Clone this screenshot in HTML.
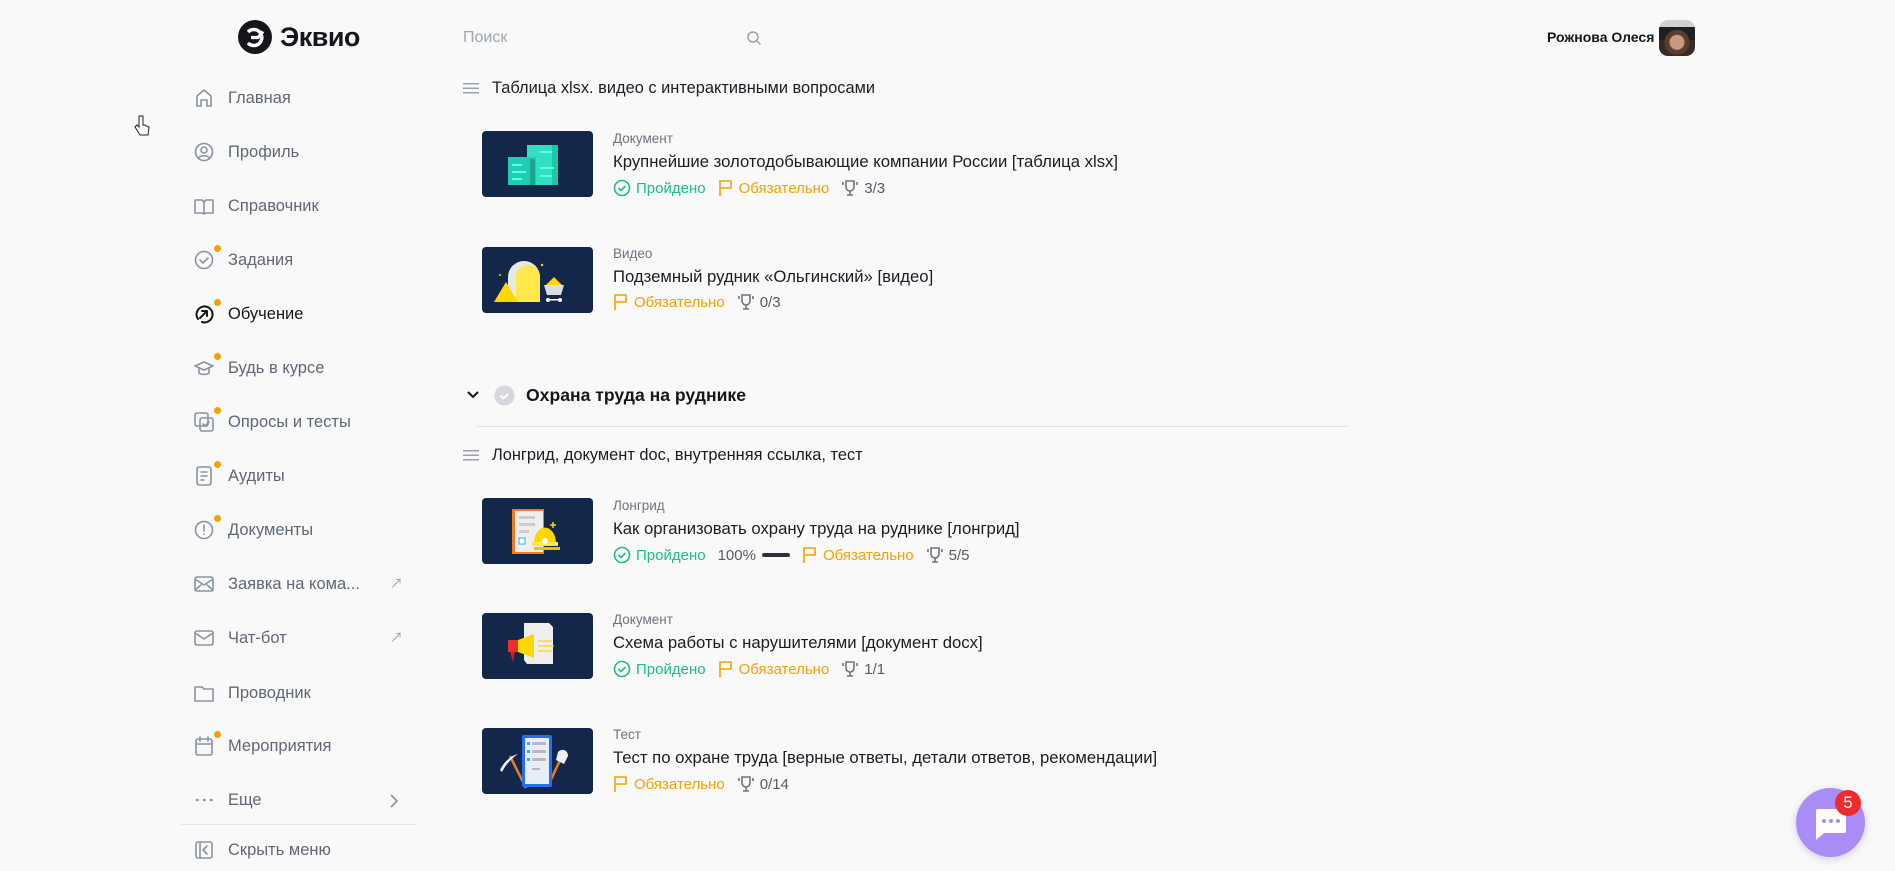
<!DOCTYPE html>
<html><head><meta charset="utf-8"><style>
*{margin:0;padding:0;box-sizing:border-box}
body{width:1895px;height:871px;background:#f9f9f9;font-family:"Liberation Sans","Noto Sans CJK SC",sans-serif;position:relative;overflow:hidden;color:#1a1d24}
.abs{position:absolute}
.nav{position:absolute;left:193px;display:flex;align-items:center;height:30px;font-size:16.5px;color:#5f6778}
.nav svg{width:22px;height:22px;margin-right:13px;fill:none;stroke:#8a93a3;stroke-width:1.6;stroke-linecap:round;stroke-linejoin:round}
.dot{position:absolute;left:214px;width:7px;height:7px;border-radius:50%;background:#f5a100}
.sec{position:absolute;left:463px;font-size:16.4px;display:flex;align-items:center}
.sec i{display:inline-block;width:16px;height:11px;margin-right:13px;background:linear-gradient(#9aa1ad 0 1.5px,transparent 1.5px 4.5px,#9aa1ad 4.5px 6px,transparent 6px 9px,#9aa1ad 9px 10.5px,transparent 10.5px);}
.thumb{position:absolute;left:482px;width:111px;height:66px;background:#13274a;border-radius:4px;overflow:hidden}
.type{position:absolute;left:613px;font-size:13.5px;color:#6d7480}
.title{position:absolute;left:613px;font-size:16.7px;color:#1a1d24}
.meta{position:absolute;left:613px;font-size:15px;display:flex;align-items:center;gap:0;color:#555c68}
.ok{color:#1dbb8a;display:flex;align-items:center;margin-right:12px}
.req{color:#f5a100;display:flex;align-items:center;margin-right:12px}
.tr{display:flex;align-items:center}
.meta svg{margin-right:5px}
</style></head><body>
<!-- logo -->
<div class="abs" style="left:238px;top:20px;width:34px;height:34px;border-radius:50%;background:#14161b"></div>
<svg class="abs" style="left:238px;top:20px" width="34" height="34" viewBox="0 0 34 34"><path d="M10 12 A8 8 0 1 1 10 23" fill="none" stroke="#fff" stroke-width="3.5"/><path d="M13 17.5h7l5-6" fill="none" stroke="#fff" stroke-width="3.2"/></svg>
<div class="abs" style="left:280px;top:22px;font-size:27px;font-weight:bold;color:#14161b;letter-spacing:-0.5px">Эквио</div>
<!-- search -->
<div class="abs" style="left:463px;top:29px;font-size:16px;color:#a0a6b0">Поиск</div>
<svg class="abs" style="left:746px;top:30px" width="16" height="16" viewBox="0 0 16 16" fill="none" stroke="#9aa1ad" stroke-width="1.5"><circle cx="7" cy="7" r="5"/><path d="M11 11l3.5 3.5"/></svg>
<!-- user -->
<div class="abs" style="left:1547px;top:29px;font-size:14px;font-weight:bold;color:#14161b">Рожнова Олеся</div>
<div class="abs" style="left:1659px;top:20px;width:36px;height:36px;border-radius:9px;background:radial-gradient(circle at 50% 62%,#c79b80 0 7px,#5a3d30 8px 12px,transparent 13px),linear-gradient(#cfd0d0 0 20%,#1e1f24 20% 55%,#3a2a24 55%)"></div>
<!-- nav -->
<div class="nav" style="top:83px"><svg viewBox="0 0 22 22"><path d="M4 19V9l7-6 7 6v10h-4v-6H8v6z"/></svg>Главная</div>
<div class="nav" style="top:137px"><svg viewBox="0 0 22 22"><circle cx="11" cy="11" r="8.5"/><circle cx="11" cy="9" r="3"/><path d="M5.5 17c2-3 9-3 11 0"/></svg>Профиль</div>
<div class="nav" style="top:191px"><svg viewBox="0 0 22 22"><path d="M2 5h7l2 2 2-2h7v13h-7l-2 1-2-1H2zM11 7v12"/></svg>Справочник</div>
<div class="dot" style="top:245px"></div>
<div class="nav" style="top:245px"><svg viewBox="0 0 22 22"><circle cx="11" cy="11" r="8.5"/><path d="M7 11l3 3 5-5"/></svg>Задания</div>
<div class="dot" style="top:299px"></div>
<div class="nav" style="top:299px;color:#14161b"><svg viewBox="0 0 22 22" style="stroke:#14161b;stroke-width:2"><path d="M5 16A8 8 0 1 1 9 19M7 15l7-7M9 8h5v5"/></svg>Обучение</div>
<div class="dot" style="top:353px"></div>
<div class="nav" style="top:353px"><svg viewBox="0 0 22 22"><path d="M2 9l9-4 9 4-9 4zM6 11v5c3 2 7 2 10 0v-5"/></svg>Будь в курсе</div>
<div class="dot" style="top:407px"></div>
<div class="nav" style="top:407px"><svg viewBox="0 0 22 22"><rect x="2" y="2" width="13" height="13" rx="2"/><rect x="7" y="7" width="13" height="13" rx="2"/><path d="M10 13l2 2 4-4"/></svg>Опросы и тесты</div>
<div class="dot" style="top:461px"></div>
<div class="nav" style="top:461px"><svg viewBox="0 0 22 22"><rect x="4" y="2" width="14" height="18" rx="2"/><path d="M8 7h6M8 11h6M8 15h3"/></svg>Аудиты</div>
<div class="dot" style="top:515px"></div>
<div class="nav" style="top:515px"><svg viewBox="0 0 22 22"><circle cx="11" cy="11" r="8.5"/><path d="M11 6v6M11 15v.5"/></svg>Документы</div>
<div class="nav" style="top:569px"><svg viewBox="0 0 22 22"><rect x="2" y="4" width="18" height="14" rx="2"/><path d="M2 6l9 6 9-6M2 17l6-5M20 17l-6-5"/></svg>Заявка на кома...</div>
<div class="abs" style="left:390px;top:573px;color:#9aa1ad;font-size:13px">↗</div>
<div class="nav" style="top:623px"><svg viewBox="0 0 22 22"><rect x="2" y="4" width="18" height="14" rx="2"/><path d="M2 6l9 6 9-6"/></svg>Чат-бот</div>
<div class="abs" style="left:390px;top:627px;color:#9aa1ad;font-size:13px">↗</div>
<div class="nav" style="top:678px"><svg viewBox="0 0 22 22"><path d="M2 5h7l2 2h9v12H2z"/></svg>Проводник</div>
<div class="dot" style="top:731px"></div>
<div class="nav" style="top:731px"><svg viewBox="0 0 22 22"><rect x="3" y="4" width="16" height="16" rx="2"/><path d="M3 9h16M7 2v4M15 2v4"/></svg>Мероприятия</div>
<div class="nav" style="top:785px"><svg viewBox="0 0 22 22"><path d="M4 11h.5M11 11h.5M18 11h.5" stroke-width="2.5"/></svg>Еще</div>
<svg class="abs" style="left:388px;top:793px" width="12" height="16" viewBox="0 0 12 16" fill="none" stroke="#8a93a3" stroke-width="1.6"><path d="M3 2l6 6-6 6"/></svg>
<div class="abs" style="left:181px;top:824px;width:235px;height:1px;background:#e2e4e8"></div>
<div class="nav" style="top:835px"><svg viewBox="0 0 22 22"><rect x="3" y="3" width="16" height="16" rx="2"/><path d="M7 3v16M14 7l-4 4 4 4"/></svg>Скрыть меню</div>
<!-- cursor -->
<svg class="abs" style="left:134px;top:115px" width="16" height="22" viewBox="0 0 16 22"><path d="M5 1v11l-2-2-2 2 5 8h8l1-8-3-1-1-1-2 0V1z" fill="#fff" stroke="#222" stroke-width="1"/></svg>

<!-- content -->
<div class="sec" style="top:79px"><i></i>Таблица xlsx. видео с интерактивными вопросами</div>

<div class="thumb" style="top:131px"><svg width="111" height="66"><rect x="45" y="14" width="31" height="40" fill="#30e0c0"/><rect x="70" y="14" width="6" height="40" fill="#1fc6a6"/><rect x="26" y="26" width="28" height="28" fill="#22ccb0"/><rect x="48" y="28" width="5" height="26" fill="#1aa890"/><g fill="#5ffff0"><rect x="30" y="33" width="10" height="2"/><rect x="30" y="40" width="14" height="2"/><rect x="30" y="47" width="10" height="2"/><rect x="58" y="20" width="12" height="2"/><rect x="58" y="36" width="14" height="2"/><rect x="58" y="44" width="12" height="2"/></g></svg></div>
<div class="type" style="top:131px">Документ</div>
<div class="title" style="top:152px">Крупнейшие золотодобывающие компании России [таблица xlsx]</div>
<div class="meta" style="top:179px"><span class="ok"><svg width="18" height="18" viewBox="0 0 18 18" fill="none" stroke="#1dbb8a" stroke-width="1.6"><circle cx="9" cy="9" r="7.5"/><path d="M5.5 9l2.5 2.5 4.5-4.5"/></svg>Пройдено</span><span class="req"><svg width="16" height="18" viewBox="0 0 16 18" fill="none" stroke="#f5a100" stroke-width="1.6"><path d="M2 17V2h11v7H2"/></svg>Обязательно</span><span class="tr"><svg width="18" height="18" viewBox="0 0 18 18" fill="none" stroke="#6d7480" stroke-width="1.6"><path d="M5 2h8v6a4 4 0 0 1-8 0zM9 12v4M6 16h6M2 3v3M16 3v3"/></svg>3/3</span></div>

<div class="thumb" style="top:247px"><svg width="111" height="66"><path d="M26 55V30a16 16 0 0 1 32 0v25z" fill="#e8e8e8"/><path d="M34 55V30a12 12 0 0 1 24 0v25z" fill="#ffe84a"/><path d="M12 55l12-20 12 20z" fill="#ffd600"/><path d="M62 38h20l-3 10H65z" fill="#ddd"/><path d="M64 38l8-8 8 8z" fill="#ffd600"/><circle cx="66" cy="53" r="2" fill="#fff"/><circle cx="78" cy="53" r="2" fill="#fff"/><rect x="66" y="52" width="12" height="1.5" fill="#fff"/><circle cx="18" cy="28" r="1" fill="#ffd600"/><circle cx="60" cy="18" r="1.2" fill="#ffd600"/></svg></div>
<div class="type" style="top:246px">Видео</div>
<div class="title" style="top:267px">Подземный рудник «Ольгинский» [видео]</div>
<div class="meta" style="top:293px"><span class="req"><svg width="16" height="18" viewBox="0 0 16 18" fill="none" stroke="#f5a100" stroke-width="1.6"><path d="M2 17V2h11v7H2"/></svg>Обязательно</span><span class="tr"><svg width="18" height="18" viewBox="0 0 18 18" fill="none" stroke="#6d7480" stroke-width="1.6"><path d="M5 2h8v6a4 4 0 0 1-8 0zM9 12v4M6 16h6M2 3v3M16 3v3"/></svg>0/3</span></div>

<!-- chapter -->
<svg class="abs" style="left:466px;top:389px" width="14" height="12" viewBox="0 0 14 12" fill="none" stroke="#14161b" stroke-width="2"><path d="M2 3l5 5 5-5"/></svg>
<svg class="abs" style="left:494px;top:385px" width="21" height="21" viewBox="0 0 21 21"><circle cx="10.5" cy="10.5" r="10" fill="#d4d7dc"/><path d="M6.5 10.5l3 3 5-5" fill="none" stroke="#fff" stroke-width="1.8"/></svg>
<div class="abs" style="left:526px;top:385px;font-size:17.6px;font-weight:bold;color:#14161b">Охрана труда на руднике</div>
<div class="abs" style="left:477px;top:426px;width:871px;height:1px;background:#e0e2e6"></div>

<div class="sec" style="top:446px"><i></i>Лонгрид, документ doc, внутренняя ссылка, тест</div>

<div class="thumb" style="top:498px"><svg width="111" height="66"><rect x="30" y="11" width="32" height="45" fill="#f07a20"/><rect x="33" y="13" width="28" height="41" fill="#eee"/><g fill="#ccc"><rect x="37" y="18" width="16" height="3"/><rect x="37" y="25" width="16" height="3"/><rect x="37" y="32" width="10" height="3"/></g><rect x="37" y="40" width="6" height="6" fill="#fff" stroke="#2bc" stroke-width="1"/><path d="M52 45a10 14 0 0 1 22 0z" fill="#ffd600"/><rect x="50" y="44" width="26" height="4" fill="#ffe84a"/><rect x="52" y="49" width="26" height="3" fill="#f0c000"/><circle cx="63" cy="43" r="3" fill="#fff"/><path d="M71 24v6M68 27h6" stroke="#ffd600" stroke-width="1.5"/></svg></div>
<div class="type" style="top:498px">Лонгрид</div>
<div class="title" style="top:519px">Как организовать охрану труда на руднике [лонгрид]</div>
<div class="meta" style="top:546px"><span class="ok"><svg width="18" height="18" viewBox="0 0 18 18" fill="none" stroke="#1dbb8a" stroke-width="1.6"><circle cx="9" cy="9" r="7.5"/><path d="M5.5 9l2.5 2.5 4.5-4.5"/></svg>Пройдено</span><span style="margin-right:6px">100%</span><span style="display:inline-block;width:28px;height:4px;border-radius:2px;background:#2b3240;margin-right:12px"></span><span class="req"><svg width="16" height="18" viewBox="0 0 16 18" fill="none" stroke="#f5a100" stroke-width="1.6"><path d="M2 17V2h11v7H2"/></svg>Обязательно</span><span class="tr"><svg width="18" height="18" viewBox="0 0 18 18" fill="none" stroke="#6d7480" stroke-width="1.6"><path d="M5 2h8v6a4 4 0 0 1-8 0zM9 12v4M6 16h6M2 3v3M16 3v3"/></svg>5/5</span></div>

<div class="thumb" style="top:613px"><svg width="111" height="66"><path d="M42 10h25l4 4v37H45l-3-4z" fill="#eee"/><rect x="26" y="27" width="10" height="12" fill="#e83030"/><path d="M28 39l3 10 2-10z" fill="#c02020"/><path d="M36 27l16-6v24l-16-6z" fill="#ffd600"/><path d="M56 28h14M56 33h16M56 38h14" stroke="#ffd600" stroke-width="1.2"/></svg></div>
<div class="type" style="top:612px">Документ</div>
<div class="title" style="top:633px">Схема работы с нарушителями [документ docx]</div>
<div class="meta" style="top:660px"><span class="ok"><svg width="18" height="18" viewBox="0 0 18 18" fill="none" stroke="#1dbb8a" stroke-width="1.6"><circle cx="9" cy="9" r="7.5"/><path d="M5.5 9l2.5 2.5 4.5-4.5"/></svg>Пройдено</span><span class="req"><svg width="16" height="18" viewBox="0 0 16 18" fill="none" stroke="#f5a100" stroke-width="1.6"><path d="M2 17V2h11v7H2"/></svg>Обязательно</span><span class="tr"><svg width="18" height="18" viewBox="0 0 18 18" fill="none" stroke="#6d7480" stroke-width="1.6"><path d="M5 2h8v6a4 4 0 0 1-8 0zM9 12v4M6 16h6M2 3v3M16 3v3"/></svg>1/1</span></div>

<div class="thumb" style="top:728px"><svg width="111" height="66"><path d="M28 28l16 32" stroke="#f07a20" stroke-width="2.5"/><path d="M18 42c4-8 10-14 18-16-6 4-12 10-16 18z" fill="#eee"/><path d="M80 28l-14 30" stroke="#f07a20" stroke-width="2.5"/><path d="M76 24c4-4 10-2 10 4l-4 8-8-4z" fill="#eee"/><rect x="40" y="7" width="30" height="52" rx="2" fill="#2a6ef0"/><rect x="43" y="10" width="24" height="46" fill="#e8eef8"/><g fill="#bbb"><rect x="50" y="14" width="14" height="3"/><rect x="50" y="22" width="14" height="3"/><rect x="50" y="30" width="14" height="3"/><rect x="50" y="40" width="8" height="2"/></g><g fill="#2bc"><rect x="45" y="14" width="3" height="3"/><rect x="45" y="22" width="3" height="3"/><rect x="45" y="30" width="3" height="3"/></g></svg></div>
<div class="type" style="top:727px">Тест</div>
<div class="title" style="top:748px">Тест по охране труда [верные ответы, детали ответов, рекомендации]</div>
<div class="meta" style="top:775px"><span class="req"><svg width="16" height="18" viewBox="0 0 16 18" fill="none" stroke="#f5a100" stroke-width="1.6"><path d="M2 17V2h11v7H2"/></svg>Обязательно</span><span class="tr"><svg width="18" height="18" viewBox="0 0 18 18" fill="none" stroke="#6d7480" stroke-width="1.6"><path d="M5 2h8v6a4 4 0 0 1-8 0zM9 12v4M6 16h6M2 3v3M16 3v3"/></svg>0/14</span></div>

<!-- chat -->
<div class="abs" style="left:1796px;top:788px;width:69px;height:69px;border-radius:50%;background:#a98cf5;box-shadow:0 2px 8px rgba(120,100,200,.3)"></div>
<svg class="abs" style="left:1812px;top:807px" width="36" height="34" viewBox="0 0 36 34"><path d="M4 2h28a2 2 0 0 1 2 2v20a2 2 0 0 1-2 2H12l-8 7V4a2 2 0 0 1 2-2z" fill="#fff"/><circle cx="12" cy="14" r="2" fill="#a98cf5"/><circle cx="19" cy="14" r="2" fill="#a98cf5"/><circle cx="26" cy="14" r="2" fill="#a98cf5"/></svg>
<div class="abs" style="left:1835px;top:790px;width:26px;height:26px;border-radius:50%;background:#ef2b2b;color:#fff;font-size:17px;text-align:center;line-height:26px">5</div>
</body></html>
